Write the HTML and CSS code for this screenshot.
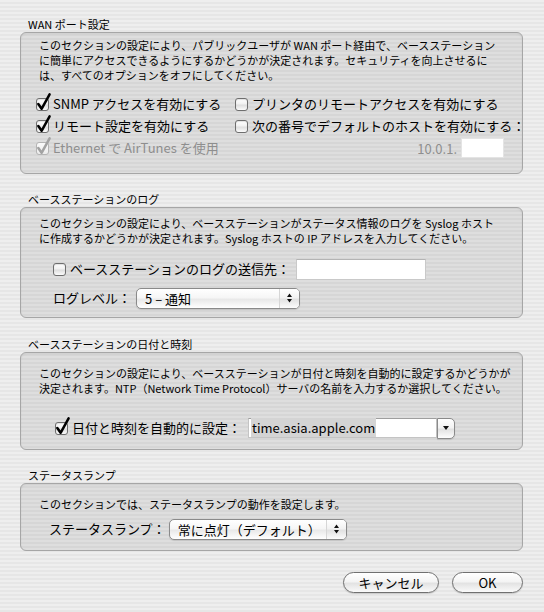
FILE: index.html
```html
<!DOCTYPE html>
<html lang="ja">
<head>
<meta charset="utf-8">
<title>ベースステーション設定</title>
<link rel="stylesheet" href="styles.css">
</head>
<body>
<div class="window">

  <section class="group">
    <h2 class="group-title">WAN ポート設定</h2>
    <div class="box box-wan">
      <p class="desc">このセクションの設定により、パブリックユーザが WAN ポート経由で、ベースステーション<br>に簡単にアクセスできるようにするかどうかが決定されます。セキュリティを向上させるに<br>は、すべてのオプションをオフにしてください。</p>
      <div class="opts">
        <div class="cbrow"><span class="cb"><svg viewBox="0 -6 17 19"><path d="M2.3 6 L5.6 10.8 L13.6 -3.6"/></svg></span><span>SNMP アクセスを有効にする</span></div>
        <div class="cbrow"><span class="cb off"></span><span>プリンタのリモートアクセスを有効にする</span></div>
        <div class="cbrow"><span class="cb"><svg viewBox="0 -6 17 19"><path d="M2.3 6 L5.6 10.8 L13.6 -3.6"/></svg></span><span>リモート設定を有効にする</span></div>
        <div class="cbrow"><span class="cb off"></span><span>次の番号でデフォルトのホストを有効にする：</span></div>
        <div class="cbrow disabled"><span class="cb"><svg viewBox="0 -6 17 19"><path d="M2.3 6 L5.6 10.8 L13.6 -3.6"/></svg></span><span>Ethernet で AirTunes を使用</span></div>
        <div class="iprow"><span class="ipprefix">10.0.1.</span><span class="field field-ip"></span></div>
      </div>
    </div>
  </section>

  <section class="group">
    <h2 class="group-title">ベースステーションのログ</h2>
    <div class="box box-log">
      <p class="desc">このセクションの設定により、ベースステーションがステータス情報のログを Syslog ホスト<br>に作成するかどうかが決定されます。Syslog ホストの IP アドレスを入力してください。</p>
      <div class="row row-syslog">
        <div class="cbrow"><span class="cb off"></span><span>ベースステーションのログの送信先：</span></div>
        <span class="field field-syslog"></span>
      </div>
      <div class="row row-level">
        <span class="label">ログレベル：</span>
        <div class="popup popup-level"><span class="popup-text">5 – 通知</span><span class="popup-arrows"><svg viewBox="0 0 5 10"><path d="M0 4 L2.5 0.5 L5 4Z M0 6 L2.5 9.5 L5 6Z"/></svg></span></div>
      </div>
    </div>
  </section>

  <section class="group group-time">
    <h2 class="group-title">ベースステーションの日付と時刻</h2>
    <div class="box box-time">
      <p class="desc">このセクションの設定により、ベースステーションが日付と時刻を自動的に設定するかどうかが<br>決定されます。NTP（Network Time Protocol）サーバの名前を入力するか選択してください。</p>
      <div class="row row-ntp">
        <div class="cbrow"><span class="cb"><svg viewBox="0 -6 17 19"><path d="M2.3 6 L5.6 10.8 L13.6 -3.6"/></svg></span><span>日付と時刻を自動的に設定：</span></div>
        <div class="combo"><span class="combo-field"><span class="sel">time.asia.apple.com</span></span><span class="combo-btn"><svg viewBox="0 0 6 4"><path d="M0 0 L6 0 L3 4Z"/></svg></span></div>
      </div>
    </div>
  </section>

  <section class="group">
    <h2 class="group-title">ステータスランプ</h2>
    <div class="box box-lamp">
      <p class="desc">このセクションでは、ステータスランプの動作を設定します。</p>
      <div class="row row-lamp">
        <span class="label">ステータスランプ：</span>
        <div class="popup popup-lamp"><span class="popup-text">常に点灯（デフォルト）</span><span class="popup-arrows"><svg viewBox="0 0 5 10"><path d="M0 4 L2.5 0.5 L5 4Z M0 6 L2.5 9.5 L5 6Z"/></svg></span></div>
      </div>
    </div>
  </section>

  <div class="buttons">
    <button class="btn btn-cancel" type="button">キャンセル</button>
    <button class="btn btn-ok" type="button">OK</button>
  </div>

</div>
</body>
</html>
```

FILE: styles.css
```css
html, body {
  margin: 0;
  padding: 0;
}

body {
  width: 544px;
  height: 612px;
  overflow: hidden;
  background: repeating-linear-gradient(to bottom, #eeeeee 0, #eeeeee 2px, #e6e6e6 2px, #e6e6e6 4px);
  font-family: "Noto Sans CJK JP", "Noto Sans", sans-serif;
  color: #000;
}

.window {
  padding: 17px 21px 0 20px;
  display: flex;
  flex-direction: column;
}

.group {
  margin-top: 18px;
}

.group:first-child {
  margin-top: 0;
}

.group-time {
  margin-top: 19px;
}

.group-title {
  margin: 0 0 1px 8px;
  font-size: 11px;
  font-weight: normal;
  line-height: 14px;
  white-space: nowrap;
}

.box {
  border: 1px solid #a6a6a6;
  border-radius: 6px;
  background: rgba(0, 0, 0, 0.065);
  box-shadow: inset 0 1px 2px rgba(0, 0, 0, 0.07);
  padding: 0 18px;
}

.box-wan { padding-top: 5px; padding-bottom: 14px; }
.box-log { padding-top: 8px; padding-bottom: 8px; }
.box-time { padding-top: 13px; padding-bottom: 10px; }
.box-lamp { padding-top: 13px; padding-bottom: 10px; }

.desc {
  margin: 0;
  font-size: 11px;
  line-height: 15px;
  white-space: nowrap;
}

/* checkbox rows */
.opts {
  margin: 10px 0 0 -3px;
  display: grid;
  grid-template-columns: 199px minmax(0, 1fr);
  grid-auto-rows: 22px;
  align-items: center;
}

.cbrow {
  display: flex;
  align-items: center;
  font-size: 13px;
  line-height: 18px;
  white-space: nowrap;
}

.cbrow.disabled {
  color: #8e8e8e;
}

.cb {
  position: relative;
  flex: none;
  box-sizing: border-box;
  width: 13px;
  height: 13px;
  margin-right: 4px;
  border: 1px solid #6e6e6e;
  border-radius: 3px;
  background: linear-gradient(to bottom, #ffffff 0%, #f1f1f1 45%, #dedede 55%, #fbfbfb 100%);
  box-shadow: inset 0 1px 1px rgba(0, 0, 0, 0.12);
}

.cb svg {
  position: absolute;
  left: -1px;
  top: -7px;
  width: 17px;
  height: 19px;
  overflow: visible;
}

.cb svg path {
  fill: none;
  stroke: #000;
  stroke-width: 2.5;
  stroke-linejoin: round;
  stroke-linecap: round;
}

.disabled .cb {
  border-color: #b4b4b4;
  background: linear-gradient(to bottom, #fafafa, #ececec);
  box-shadow: none;
}

.disabled .cb svg path {
  stroke: #a2a2a2;
}

.iprow {
  display: flex;
  align-items: center;
  justify-content: flex-end;
  font-size: 13px;
  margin-right: 0;
}

.ipprefix {
  color: #8e8e8e;
  margin-right: 4px;
}

.field {
  display: block;
  box-sizing: border-box;
  background: #fff;
  border: 1px solid #c9c9c9;
  border-top-color: #b4b4b4;
}

.field-ip {
  width: 43px;
  height: 20px;
  border-color: #e4e4e4;
}

/* generic rows */
.row {
  display: flex;
  align-items: center;
  height: 22px;
  font-size: 13px;
  white-space: nowrap;
}

.label {
  line-height: 18px;
}

.row-syslog {
  margin: 12px 0 0 14px;
}

.field-syslog {
  width: 130px;
  height: 21px;
  margin-left: 6px;
}

.row-level {
  margin: 7px 0 0 14px;
}

.row-ntp {
  margin: 21px 0 0 16px;
}

.row-lamp {
  margin: 6px 0 0 10px;
}

/* popup buttons */
.popup {
  display: flex;
  align-items: stretch;
  box-sizing: border-box;
  height: 21px;
  border: 1px solid #8a8a8a;
  border-radius: 5px;
  background: linear-gradient(to bottom, #ffffff 0%, #f6f6f6 45%, #e9e9e9 55%, #ffffff 100%);
  box-shadow: 0 1px 1px rgba(0, 0, 0, 0.12);
}

.popup-level {
  width: 164px;
  margin-left: 5px;
}

.popup-lamp {
  width: 178px;
  margin-left: 3px;
}

.popup-text {
  flex: 1;
  padding-left: 8px;
  line-height: 19px;
}

.popup-arrows {
  flex: none;
  width: 19px;
  display: flex;
  align-items: center;
  justify-content: center;
  border-left: 1px solid #d6d6d6;
  background: linear-gradient(to bottom, #ffffff 0%, #f2f2f2 45%, #e2e2e2 55%, #fcfcfc 100%);
  border-radius: 0 4px 4px 0;
}

.popup-arrows svg {
  width: 5px;
  height: 10px;
}

.popup-arrows path,
.combo-btn path {
  fill: #111;
}

/* combo box */
.combo {
  display: flex;
  height: 21px;
  margin-left: 7px;
}

.combo-field {
  box-sizing: border-box;
  width: 189px;
  height: 20px;
  background: #fff;
  border: 1px solid #c4c4c4;
  border-top-color: #9e9e9e;
  padding-left: 2px;
  line-height: 18px;
}

.sel {
  background: #d4d4d4;
  padding: 0 1px;
}

.combo-btn {
  box-sizing: border-box;
  width: 18px;
  height: 21px;
  display: flex;
  align-items: center;
  justify-content: center;
  border: 1px solid #8a8a8a;
  border-radius: 0 5px 5px 0;
  background: linear-gradient(to bottom, #ffffff 0%, #f3f3f3 45%, #e2e2e2 55%, #fdfdfd 100%);
  box-shadow: 0 1px 1px rgba(0, 0, 0, 0.12);
}

.combo-btn svg {
  width: 6px;
  height: 4px;
}

/* push buttons */
.buttons {
  display: flex;
  justify-content: flex-end;
  gap: 13px;
  margin-top: 21px;
}

.btn {
  box-sizing: border-box;
  height: 21px;
  padding: 0;
  border: 1px solid #707070;
  border-radius: 11px;
  background: linear-gradient(to bottom, #ffffff 0%, #f4f4f4 45%, #e3e3e3 55%, #fafafa 100%);
  box-shadow: 0 1px 1px rgba(0, 0, 0, 0.15);
  font-family: "Noto Sans CJK JP", "Noto Sans", sans-serif;
  font-size: 13px;
  line-height: 19px;
  color: #000;
}

.btn-cancel {
  width: 96px;
}

.btn-ok {
  width: 71px;
}
```
